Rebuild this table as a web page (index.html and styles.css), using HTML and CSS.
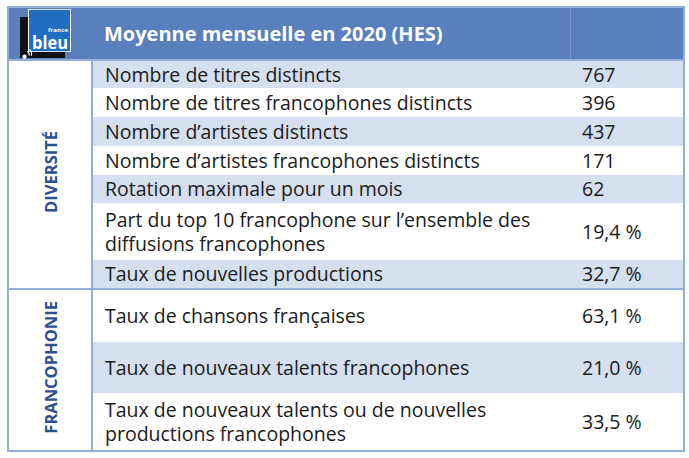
FILE: index.html
```html
<!DOCTYPE html>
<html lang="fr">
<head>
<meta charset="utf-8">
<title>Moyenne mensuelle en 2020 (HES)</title>
<link rel="stylesheet" href="styles.css">
</head>
<body>
<div class="wrap">
<table class="stats">
  <colgroup><col class="c-label"><col class="c-text"><col class="c-val"></colgroup>
  <thead>
    <tr class="head">
      <th class="logo-cell">
        <svg class="logo" width="82" height="51" viewBox="0 0 82 51" xmlns="http://www.w3.org/2000/svg">
          <rect x="10" y="9" width="45" height="41" fill="#111"/>
          <rect x="18" y="1" width="43" height="43" fill="#fff"/>
          <rect x="19" y="1.8" width="41" height="41.4" fill="#1f6ec4"/>
          <text x="58" y="23.5" font-family="'Open Sans', sans-serif" font-size="6" fill="#fff" text-anchor="end" textLength="20">france</text>
          <text x="22" y="41" font-family="'Open Sans', sans-serif" font-size="18" font-weight="700" fill="#fff" textLength="36" lengthAdjust="spacingAndGlyphs">bleu</text>
          <path d="M14.5 46.5 a2.2 2.2 0 1 0 0.1 0" fill="#fff"/>
          <path d="M17.2 43.3 q2.6 1.2 1.8 4.2" stroke="#fff" stroke-width="1.1" fill="none"/>
          <path d="M18.6 41.2 q4 1.6 2.8 6.6" stroke="#fff" stroke-width="1.1" fill="none"/>
        </svg>
      </th>
      <th class="title">Moyenne mensuelle en 2020 (HES)</th>
      <th class="title-val"></th>
    </tr>
  </thead>
  <tbody class="sec">
    <tr class="h28 shade"><th rowspan="7" class="label"><span class="vert">DIVERSITÉ</span></th><td class="txt">Nombre de titres distincts</td><td class="val">767</td></tr>
    <tr class="h29"><td class="txt">Nombre de titres francophones distincts</td><td class="val">396</td></tr>
    <tr class="h29 shade"><td class="txt">Nombre d’artistes distincts</td><td class="val">437</td></tr>
    <tr class="h29"><td class="txt">Nombre d’artistes francophones distincts</td><td class="val">171</td></tr>
    <tr class="h28 shade"><td class="txt">Rotation maximale pour un mois</td><td class="val">62</td></tr>
    <tr class="h57"><td class="txt">Part du top 10 francophone sur l’ensemble des diffusions francophones</td><td class="val">19,4 %</td></tr>
    <tr class="h29 shade"><td class="txt">Taux de nouvelles productions</td><td class="val">32,7 %</td></tr>
  </tbody>
  <tbody class="sec">
    <tr class="h53"><th rowspan="3" class="label"><span class="vert">FRANCOPHONIE</span></th><td class="txt">Taux de chansons françaises</td><td class="val">63,1 %</td></tr>
    <tr class="h51 shade"><td class="txt">Taux de nouveaux talents francophones</td><td class="val">21,0 %</td></tr>
    <tr class="h58"><td class="txt">Taux de nouveaux talents ou de nouvelles productions francophones</td><td class="val">33,5 %</td></tr>
  </tbody>
</table>
</div>
</body>
</html>
```
FILE: styles.css
```css
html, body {
  margin: 0;
  padding: 0;
  background: #ffffff;
}

.wrap {
  padding: 6px 0 0 7px;
}

.stats {
  border-collapse: collapse;
  table-layout: fixed;
  width: 676px;
  font-family: "Open Sans", "DejaVu Sans", sans-serif;
  color: #1b1b1b;
  border: 2px solid #93acd8;
}

.c-label { width: 84px; }
.c-text { width: 478px; }
.c-val { width: 114px; }

.stats th, .stats td {
  padding: 0;
  vertical-align: middle;
  text-align: left;
}

.head {
  height: 51px;
  background: #5a7fbd;
}

.head th {
  border-bottom: 1px solid #a9bde0;
}

.logo-cell {
  padding: 0;
}

.logo {
  display: block;
  margin-left: 1px;
}

.title {
  color: #ffffff;
  font-weight: 700;
  font-size: 20px;
  padding-left: 12px !important;
}

.title-val {
  border-left: 1px solid #7795ca;
}

.sec {
  border-top: 2px solid #93acd8;
}

.label {
  background: #ffffff;
  border-right: 2px solid #93acd8;
  text-align: center !important;
}

.vert {
  display: inline-block;
  writing-mode: vertical-rl;
  transform: rotate(180deg);
  font-size: 16.5px;
  font-weight: 700;
  color: #2c4f8e;
}

.txt {
  font-size: 19.5px;
  line-height: 24px;
  padding-left: 12px !important;
  padding-right: 8px !important;
}

.val {
  font-size: 19.5px;
  line-height: 24px;
  padding-left: 12px !important;
}

.shade td { background: #d5dff0; }

.h28 { height: 28px; }
.h29 { height: 29px; }
.h51 { height: 51px; }
.h53 { height: 53px; }
.h57 { height: 57px; }
.h58 { height: 58px; }
```
